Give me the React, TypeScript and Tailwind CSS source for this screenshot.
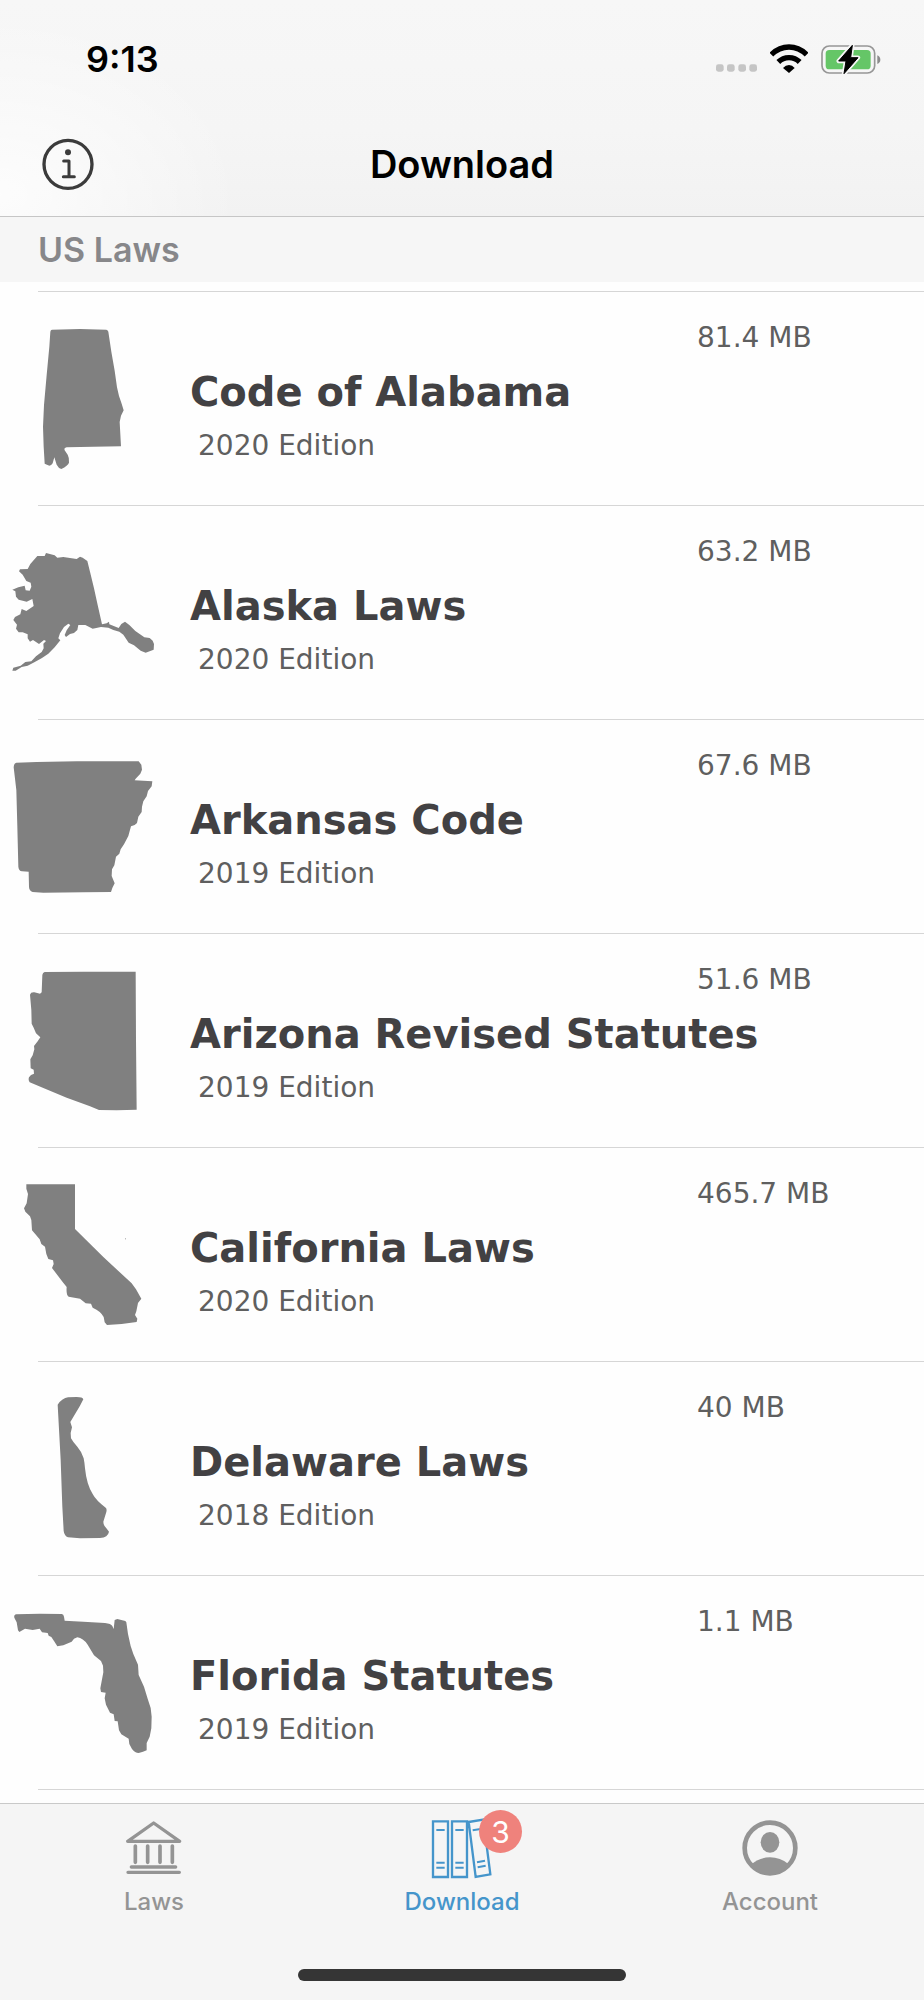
import type { ReactNode } from "react";

type Law = {
  title: string;
  edition: string;
  size: string;
  viewBox: string;
  shape: string;
};

const laws: Law[] = [
  {
    title: "Code of Alabama",
    edition: "2020 Edition",
    size: "81.4 MB",
    viewBox: "36 141 426 426",
    shape:
      "M156 149L240 147L319 149Q324 150 325 155L334 215L344 272L351 322L357 348L364 368L371 391L363 407L359 426L363 499L280 500L200 502Q191 504 194 511L203 524Q208 532 207 548Q204 557 184 567Q175 564 170 554L163 532L158 550Q154 557 148 557L134 551L131 500L129 440L132 375L140 285L148 200L151 155Q152 149 156 149Z",
  },
  {
    title: "Alaska Laws",
    edition: "2020 Edition",
    size: "63.2 MB",
    viewBox: "36 123 426 426",
    shape:
      "M112 168L134 168L138 159L164 166L172 173L190 171L230 177L240 170L248 173L262 183L270 215L282 265L293 315L306 373L320 370L327 365L328 373L356 384L364 372L375 365L388 375L406 393L433 412L449 414L458 422L462 432L461 449L437 458L422 452L402 436L386 428L370 404L358 395L340 390L325 383L303 381L278 386L256 375L235 375L232 390L222 399L210 402L198 411L194 405L200 391L211 375L205 371L192 381L180 400L175 415L181 421L164 442L145 461L126 474L103 487L83 497L65 501L47 512L37 512L40 503L62 497L76 486L94 484L108 469L125 456L131 445L130 431L138 423L132 420L117 432L99 420L90 425L83 415L83 403L68 397L56 397L48 386L51 374L40 360L45 351L61 343L65 327L79 333L101 318L97 297L80 305L56 299L48 290L46 274L37 269L55 262L74 257L77 271L89 272L94 260L92 248L79 243L68 224L57 214L60 208L83 207L91 192Z",
  },
  {
    title: "Arkansas Code",
    edition: "2019 Edition",
    size: "67.6 MB",
    viewBox: "36 105 426 426",
    shape:
      "M49 128L110 126L230 124L416 124L424 134L426 149L421 161L407 176L404 181L430 182L457 184L455 199L444 213L440 229L430 244L426 260L425 276L415 290L411 309L404 315L393 319L385 348L372 373L362 388L358 401L348 410L343 436L336 448L335 468L344 490L337 504L333 516L250 517L130 518L98 516Q87 512 87 500L86 455L66 454Q56 452 55 440L52 320L49 210L41 142Q42 129 49 128Z",
  },
  {
    title: "Arizona Revised Statutes",
    edition: "2019 Edition",
    size: "51.6 MB",
    viewBox: "36 87 426 426",
    shape:
      "M134 96L250 95L407 95L408 300L410 509L350 511L297 510L270 499L200 473L130 444L89 427Q84 420 87 412L93 405L102 401L101 389L92 385L91 358L98 346L103 328L102 318L113 304L121 292L108 280L101 263L95 251L94 210L90 164Q92 156 103 157L120 161L125 157L127 105Q128 97 134 96Z",
  },
  {
    title: "California Laws",
    edition: "2020 Edition",
    size: "465.7 MB",
    viewBox: "36 99 426 426",
    shape:
      "M79 103L225 103L225 237L310 321L395 400L408 418L424 446L414 459L409 484L405 495L412 506L410 516L365 522L321 525L314 517L311 501Q303 484 278 473L273 461L257 460L240 446L206 440Q198 436 200 411L188 396L156 354L161 342L159 331L145 327L139 312L135 290L124 282L119 268L96 241L94 210L90 199L76 185L72 175L80 160L84 132L79 116ZM375 264L378 266L376 269Z",
  },
  {
    title: "Delaware Laws",
    edition: "2018 Edition",
    size: "40 MB",
    viewBox: "36 111 426 426",
    shape:
      "M173 134Q187 114 204 112L230 111Q248 111 250 118L240 137L211 186L216 202L212 219L213 235Q220 248 232 260Q246 276 251 295Q254 310 255 325Q260 374 278 402Q287 420 318 444Q321 449 319 456L310 485Q310 496 318 503L327 515Q324 532 300 534L240 535L204 532Q193 528 191 513L187 440L182 300L176 190Z",
  },
  {
    title: "Florida Statutes",
    edition: "2019 Edition",
    size: "1.1 MB",
    viewBox: "36 123 426 426",
    shape:
      "M48 133L120 131L185 132Q191 133 192 140L194 152L250 155L315 159Q333 161 337 168L341 177L344 150L352 147L376 153L379 157L384 192L392 228L400 252L414 284L416 315L432 350L443 386L452 414L455 440L454 475L449 500L440 519L440 541L429 545L416 549Q405 549 396 537L388 522L386 506L364 493L357 481L353 454L344 453L341 433L330 428L318 404L314 385L317 368L303 366L301 355L310 307L309 287L303 273L282 256L263 224Q249 204 232 202L222 206L215 215L190 226L172 229L162 213L154 201L146 197L143 189L126 187L119 176L98 180L75 176L58 186L54 181L50 157L43 143Q41 135 48 133Z",
  },
];

function CourthouseIcon() {
  return (
    <svg viewBox="198 90 168 168" className="h-14 w-14" fill="none" stroke="currentColor" aria-hidden="true">
      <path d="M203 154L281 99L359 154Z" strokeWidth="10" strokeLinejoin="round" />
      <path d="M226 168V217M263 168V217M300 168V217M337 168V217" strokeWidth="11" strokeLinecap="round" />
      <path d="M214 231H347M204 247H358" strokeWidth="10" strokeLinecap="round" />
    </svg>
  );
}

function BinderIcon() {
  return (
    <svg viewBox="1113 83 186 183" className="h-[61px] w-[62px]" fill="none" stroke="currentColor" aria-hidden="true">
      <g strokeWidth="7">
        <path d="M1119 93H1164V260H1119ZM1176 93H1221V260H1176ZM1226 95L1270 88L1291 252L1247 260Z" />
        <path
          d="M1129 119H1154M1129 217H1154M1129 232H1154M1186 119H1211M1186 217H1211M1186 232H1211M1238 120L1262 116M1251 216L1275 211M1253 231L1277 226"
          strokeWidth="6"
        />
      </g>
    </svg>
  );
}

function PersonIcon() {
  return (
    <svg viewBox="603 119 168 168" className="h-14 w-14" aria-hidden="true">
      <circle cx="687" cy="203" r="76" fill="none" stroke="currentColor" strokeWidth="14" />
      <ellipse cx="687" cy="186" rx="28" ry="31" fill="currentColor" />
      <path d="M632 251Q656 231 687 231T742 251Q720 284 687 284T632 251Z" fill="currentColor" />
    </svg>
  );
}

function StatusBar() {
  return (
    <div className="flex h-[112px] items-center justify-between pl-[86px] pr-[43px] pt-1.5">
      <span className="text-[36px] font-semibold leading-none">9:13</span>
      <div className="flex items-end gap-[13px]">
        <svg viewBox="0 0 123 24" className="mb-0.5 h-2 w-[41px]" fill="#c5c5c5" aria-hidden="true">
          <rect x="0" y="1" width="23" height="22" rx="7" />
          <rect x="33" y="1" width="23" height="22" rx="7" />
          <rect x="67" y="1" width="23" height="22" rx="7" />
          <rect x="100" y="1" width="23" height="22" rx="7" />
        </svg>
        <svg viewBox="924 129 114 90" className="h-[30px] w-[38px]" fill="none" stroke="black" aria-hidden="true">
          <path d="M928 161Q951 138 981 138T1034 161" strokeWidth="16" />
          <path d="M949 183Q962 170 981 170T1013 183" strokeWidth="16" />
          <path d="M981 216L963 201Q971 192 981 192T998 201Z" fill="black" stroke="none" />
        </svg>
        <svg viewBox="1077 129 180 90" className="h-[30px] w-[60px]" aria-hidden="true">
          <rect x="1080" y="135" width="158" height="81" rx="22" fill="none" stroke="#979797" strokeWidth="5" />
          <rect x="1091" y="147" width="135" height="58" rx="11" fill="#65c667" />
          <path d="M1246 163Q1255 167 1255 176T1246 189Z" fill="#8c8c8c" />
          <path
            d="M1171 133L1130 180H1152L1146 218L1188 170H1166Z"
            stroke="#f6f6f6"
            strokeWidth="13"
            strokeLinejoin="round"
          />
          <path d="M1171 133L1130 180H1152L1146 218L1188 170H1166Z" stroke="black" strokeWidth="3" strokeLinejoin="round" />
        </svg>
      </div>
    </div>
  );
}

function LawRow({ law }: { law: Law }) {
  return (
    <li>
      <div className="ml-[38px] h-px bg-[#d6d6d6]" />
      <div className="flex h-[213px] gap-9 pl-3">
        <svg viewBox={law.viewBox} className="mt-[35px] h-[142px] w-[142px] shrink-0" fill="#808080" aria-hidden="true">
          <path d={law.shape} />
        </svg>
        <div className="flex min-w-0 flex-1 flex-col pt-7 font-['DejaVu_Sans',sans-serif]">
          <p className="w-[227px] self-end text-[28px] leading-9 text-[#5f5f5f]">{law.size}</p>
          <h3 className="mt-3 whitespace-nowrap text-[40px] font-bold leading-[48px] text-[#424143]">{law.title}</h3>
          <p className="mt-3 pl-2 text-[28px] leading-9 text-[#5f5f5f]">{law.edition}</p>
        </div>
      </div>
    </li>
  );
}

function Tab({ label, active, badge, children }: { label: string; active?: boolean; badge?: number; children: ReactNode }) {
  return (
    <a
      href="#"
      aria-current={active ? "page" : undefined}
      className={`flex flex-col items-center gap-2.5 pt-3.5 ${active ? "text-[#4595cb]" : "text-[#949494]"}`}
    >
      <span className="relative flex h-[60px] items-center">
        {children}
        {badge ? (
          <span className="absolute -top-2 left-12 flex h-[43px] w-[43px] items-center justify-center rounded-full bg-[#ef827c] text-[30px] leading-none text-white">
            {badge}
          </span>
        ) : null}
      </span>
      <span className="text-[24px] font-medium leading-7">{label}</span>
    </a>
  );
}

export default function App() {
  return (
    <div className="flex min-h-screen flex-col bg-[#fefefe] font-['Inter',sans-serif] text-black">
      <header className="border-b border-[#c6c6c6] bg-[radial-gradient(ellipse_240px_180px_at_0%_90%,#ffffffcc_0%,#ffffff66_50%,#ffffff00_100%),linear-gradient(#f7f7f7,#f5f5f5_60%,#f2f2f2)]">
        <StatusBar />
        <div className="grid h-[104px] grid-cols-[1fr_auto_1fr] items-center px-[42px]">
          <button type="button" aria-label="Information" className="w-[52px]">
            <svg viewBox="127 413 156 156" className="h-[52px] w-[52px]" fill="none" stroke="#3b3b3b" aria-hidden="true">
              <circle cx="205" cy="492" r="72" strokeWidth="10" />
              <circle cx="205" cy="456" r="9" fill="#3b3b3b" stroke="none" />
              <path d="M192 482H208V529M191 529H224" strokeWidth="9" strokeLinecap="round" strokeLinejoin="round" />
            </svg>
          </button>
          <h1 className="text-[38px] font-semibold leading-none">Download</h1>
        </div>
      </header>

      <main className="flex-1">
        <h2 className="flex h-[65px] items-center bg-[#f6f6f6] pl-[38px] text-[34px] font-semibold leading-none text-[#87878a]">
          US Laws
        </h2>
        <ul className="pt-[9px]">
          {laws.map((law) => (
            <LawRow key={law.title} law={law} />
          ))}
        </ul>
        <div className="ml-[38px] h-px bg-[#d6d6d6]" />
      </main>

      <footer className="border-t border-[#c9c9c9] bg-[#f5f5f5]">
        <nav className="grid grid-cols-3">
          <Tab label="Laws">
            <CourthouseIcon />
          </Tab>
          <Tab label="Download" active badge={3}>
            <BinderIcon />
          </Tab>
          <Tab label="Account">
            <PersonIcon />
          </Tab>
        </nav>
        <div className="mx-auto mb-[19px] mt-[53px] h-3 w-[328px] rounded-full bg-[#353535]" />
      </footer>
    </div>
  );
}
